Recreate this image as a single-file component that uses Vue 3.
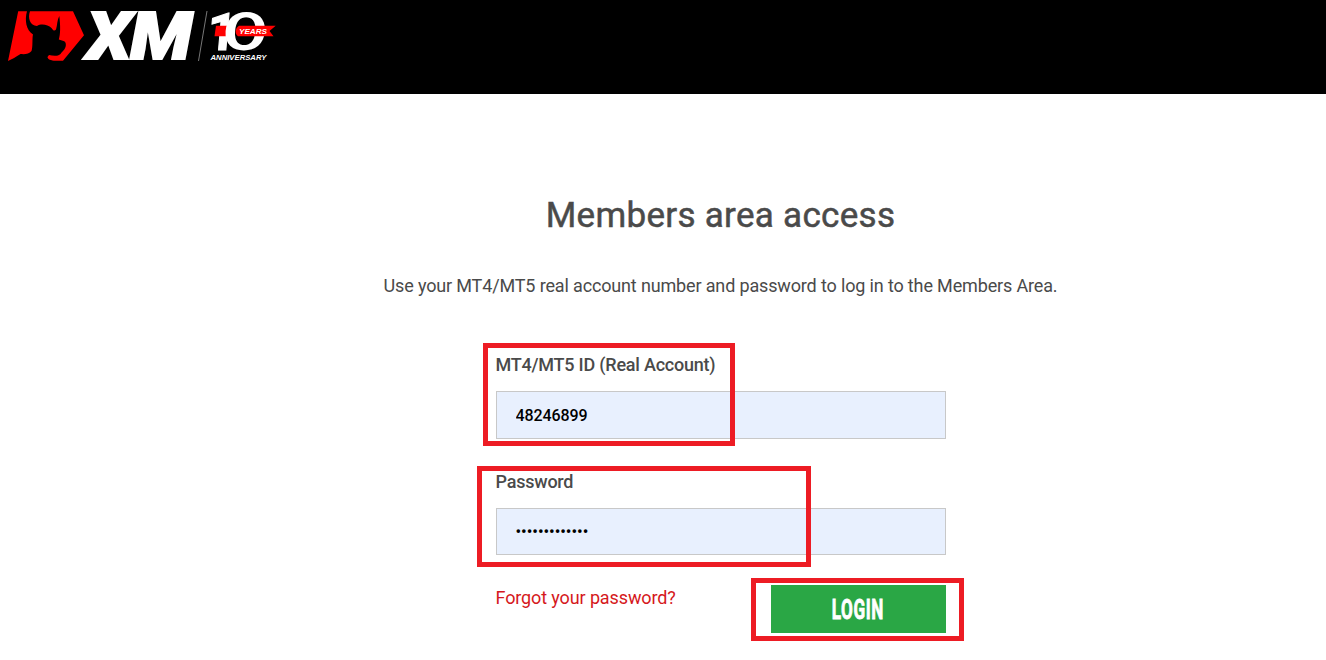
<script setup>
import { ref } from 'vue';

const account = ref('48246899');
const password = ref('mypassword123');

// highlighted areas of the login form
const marks = ['mark-account', 'mark-password', 'mark-login'];
</script>

<template>
    <div class="page">
        <header class="header">
            <svg class="logo" width="280" height="72" viewBox="0 0 280 72">
                <path fill="#ff0000" d="M18.2 11.3 H73 L84 35.3 L63 60.8 H55.5 C51 60.5 47.5 59.5 47.5 57 L49 55 C53 56 58 56.5 60.5 54 C61 53 62 52 63 51 C66.5 48 67 42 63.5 41 L58.8 39.5 C60.5 34 60.5 26 59.3 16 C57 20 57.5 25 56 29.5 C54.5 31.5 53 30.5 51.5 28 C48 24.5 41 23.5 37 26 C30 26 27.5 18 30 11.3 H27 C24.5 20 26 30 33 34.5 C32 38 33 47 31.5 51 C29 54 25 54.5 20.5 54 C16 57 12 59 8 61 Z" />
                <text class="xm" transform="translate(86.5 59.4) scale(1.1 1)">XM</text>
                <path stroke="#777" stroke-width="1" d="M207 11 L198.5 61" />
                <text class="ten" transform="translate(205.5 50) skewX(-5)">1</text>
                <path fill="#ff0000" d="M216 25.7 H228 V36.3 H214.5 Z" />
                <text class="zero" transform="translate(222.5 49.5) skewX(-4) scale(1.42 1)">0</text>
                <path fill="#ff0000" d="M239 25.7 H275.7 L269.5 31 L273.5 36.3 H238 C234.5 34 235 28 239 25.7 Z" />
                <text class="years" x="239" y="33.8" textLength="28" lengthAdjust="spacingAndGlyphs">YEARS</text>
                <text class="anniversary" x="210.5" y="60.2" textLength="56" lengthAdjust="spacingAndGlyphs">ANNIVERSARY</text>
            </svg>
        </header>
        <main class="content">
            <h1>Members area access</h1>
            <p class="intro">Use your MT4/MT5 real account number and password to log in to the Members Area.</p>
            <form class="form" @submit.prevent>
                <label for="account">MT4/MT5 ID (Real Account)</label>
                <input id="account" type="text" v-model="account">
                <label for="password">Password</label>
                <input id="password" class="password" type="password" v-model="password">
                <div class="actions">
                    <a class="forgot">Forgot your password?</a>
                    <button type="submit"><span>LOGIN</span></button>
                </div>
            </form>
        </main>
        <div v-for="mark in marks" :key="mark" class="mark" :class="mark"></div>
    </div>
</template>

<style>
body {
    margin: 0;
    background-color: #fff;
}
</style>

<style scoped>
.page {
    position: relative;
    height: 660px;
    overflow: hidden;
    font-family: Roboto, "Liberation Sans", sans-serif;
    color: #4a4a4a;
}

.header {
    height: 94px;
    background-color: #000;
}

.logo {
    display: block;
    overflow: visible;
}

.logo text {
    font-family: "Liberation Sans", Arial, sans-serif;
    font-weight: bold;
    fill: #fff;
}

.logo .xm {
    font-family: Roboto, sans-serif;
    font-size: 66px;
    font-style: italic;
    font-weight: 900;
    letter-spacing: -1px;
    stroke: #fff;
    stroke-width: 2px;
}

.logo .ten {
    font-family: Roboto, sans-serif;
    font-size: 52px;
    font-weight: 700;
    stroke: #fff;
    stroke-width: 1px;
}

.logo .zero {
    font-family: Lato, sans-serif;
    font-size: 52px;
    font-weight: 700;
}

.logo .years {
    font-size: 8px;
    font-style: italic;
}

.logo .anniversary {
    font-size: 7px;
    font-style: italic;
}

.content {
    display: flex;
    flex-direction: column;
    align-items: center;
    padding: 99px 0 0 115px;
}

h1 {
    margin: 0;
    font-size: 35px;
    font-weight: 400;
    line-height: 46px;
    letter-spacing: 0.3px;
    -webkit-text-stroke: 0.5px #4a4a4a;
}

.intro {
    margin: 35px 0 0;
    font-size: 18px;
    line-height: 24px;
    letter-spacing: -0.15px;
}

.form {
    display: flex;
    flex-direction: column;
    width: 450px;
    margin-top: 55px;
}

label {
    margin-bottom: 14px;
    font-size: 18px;
    font-weight: 500;
    line-height: 24px;
    letter-spacing: -0.22px;
}

input {
    box-sizing: border-box;
    width: 450px;
    height: 48px;
    margin: 0 0 31px;
    padding: 0 19px;
    border: 1px solid #c8c8c8;
    border-radius: 0;
    outline: none;
    background-color: #e8f0fe;
    color: #000;
    font-family: Roboto, sans-serif;
    font-size: 16px;
    font-weight: 500;
    letter-spacing: -0.1px;
}

input.password {
    height: 47px;
    margin-bottom: 30px;
    letter-spacing: 0;
}

.actions {
    display: flex;
    justify-content: space-between;
    align-items: flex-start;
}

.forgot {
    color: #d51820;
    font-size: 18px;
    line-height: 26px;
    letter-spacing: -0.12px;
}

button {
    width: 175px;
    height: 48px;
    padding: 0;
    border: 0;
    background-color: #2aa745;
    color: #fff;
    font-family: Roboto, sans-serif;
    font-size: 28px;
    font-weight: 700;
    line-height: 48px;
}

button span {
    display: inline-block;
    padding-top: 1px;
    letter-spacing: 1px;
    -webkit-text-stroke: 0.9px #fff;
    transform: scaleX(0.61);
}

.mark {
    position: absolute;
    box-sizing: border-box;
    border: 5px solid #ed1c24;
    pointer-events: none;
}

.mark-account {
    left: 483px;
    top: 343px;
    width: 252px;
    height: 103px;
}

.mark-password {
    left: 477px;
    top: 466px;
    width: 334px;
    height: 101px;
}

.mark-login {
    left: 751px;
    top: 578px;
    width: 213px;
    height: 63px;
}
</style>
